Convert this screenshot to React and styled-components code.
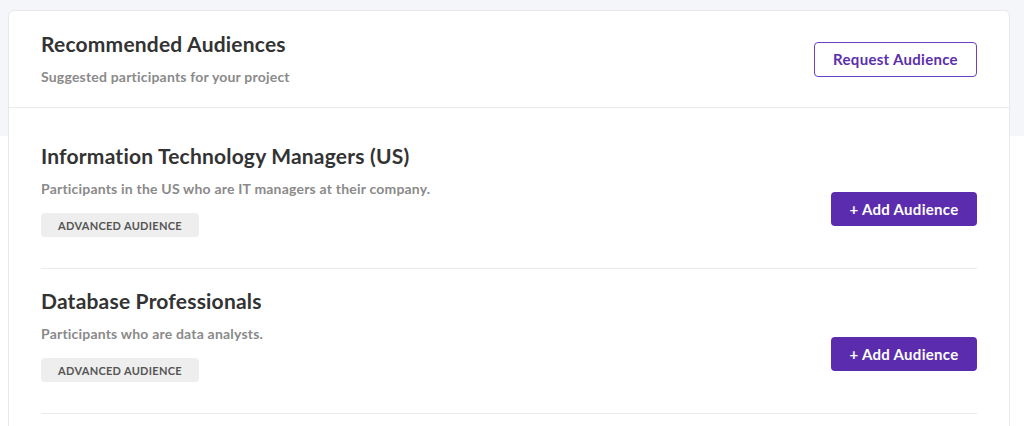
import styled, { createGlobalStyle } from "styled-components";

const audiences = [
  {
    title: "Information Technology Managers (US)",
    description: "Participants in the US who are IT managers at their company.",
    tag: "Advanced Audience",
  },
  {
    title: "Database Professionals",
    description: "Participants who are data analysts.",
    tag: "Advanced Audience",
  },
];

export default function App() {
  return (
    <>
      <GlobalStyle />
      <Card>
        <Header>
          <HeaderText>
            <Title>Recommended Audiences</Title>
            <Subtitle>Suggested participants for your project</Subtitle>
          </HeaderText>
          <OutlineButton type="button">Request Audience</OutlineButton>
        </Header>
        <List>
          {audiences.map((a) => (
            <Row key={a.title}>
              <RowText>
                <Title>{a.title}</Title>
                <Subtitle>{a.description}</Subtitle>
                <Tag>{a.tag}</Tag>
              </RowText>
              <AddButton type="button">+ Add Audience</AddButton>
            </Row>
          ))}
        </List>
      </Card>
    </>
  );
}

// Styled components

const GlobalStyle = createGlobalStyle`
  html, body {
    margin: 0;
    padding: 0;
  }
  body {
    font-family: Lato, "Liberation Sans", sans-serif;
    background: linear-gradient(#f5f6fa 0, #f5f6fa 136px, #ffffff 136px);
    min-height: 426px;
    overflow: hidden;
  }
`;

const Card = styled.div`
  margin: 10px 14px 0 8px;
  background: #fff;
  border: 1px solid #e7e8ec;
  border-radius: 6px;
  min-height: 420px;
`;

const Header = styled.div`
  display: flex;
  align-items: center;
  justify-content: space-between;
  padding: 21px 32px 21px 32px;
  border-bottom: 1px solid #e9eaee;
`;

const HeaderText = styled.div`
  display: flex;
  flex-direction: column;
  gap: 12px;
`;

const Title = styled.h2`
  margin: 0;
  font-size: 21px;
  line-height: 24px;
  font-weight: 700;
  letter-spacing: 0.2px;
  color: #333333;
`;

const Subtitle = styled.p`
  margin: 0;
  font-size: 14px;
  line-height: 18px;
  font-weight: 700;
  letter-spacing: 0.2px;
  color: #8a8a8a;
`;

const OutlineButton = styled.button`
  font-family: inherit;
  width: 163px;
  height: 35px;
  background: #fff;
  border: 1.5px solid #6b40c4;
  border-radius: 4px;
  color: #5b2fae;
  font-size: 15px;
  font-weight: 700;
  letter-spacing: 0.3px;
  cursor: pointer;
`;

const List = styled.div`
  padding: 16px 32px 0 32px;
`;

const Row = styled.div`
  display: flex;
  align-items: flex-end;
  justify-content: space-between;
  padding: 20px 0 31px;
  border-bottom: 1px solid #e9eaee;
`;

const RowText = styled.div`
  display: flex;
  flex-direction: column;
  align-items: flex-start;
  gap: 12px;
`;

const Tag = styled.span`
  display: inline-flex;
  align-items: center;
  justify-content: center;
  margin-top: 3px;
  width: 158px;
  height: 24px;
  background: #eeeeee;
  border-radius: 4px;
  color: #555555;
  font-size: 11px;
  font-weight: 700;
  letter-spacing: 0.3px;
  text-transform: uppercase;
`;

const AddButton = styled.button`
  font-family: inherit;
  width: 146px;
  height: 34px;
  margin-bottom: 11px;
  background: #5b2dae;
  border: none;
  border-radius: 4px;
  color: #fff;
  font-size: 15px;
  font-weight: 700;
  letter-spacing: 0.3px;
  cursor: pointer;
`;
